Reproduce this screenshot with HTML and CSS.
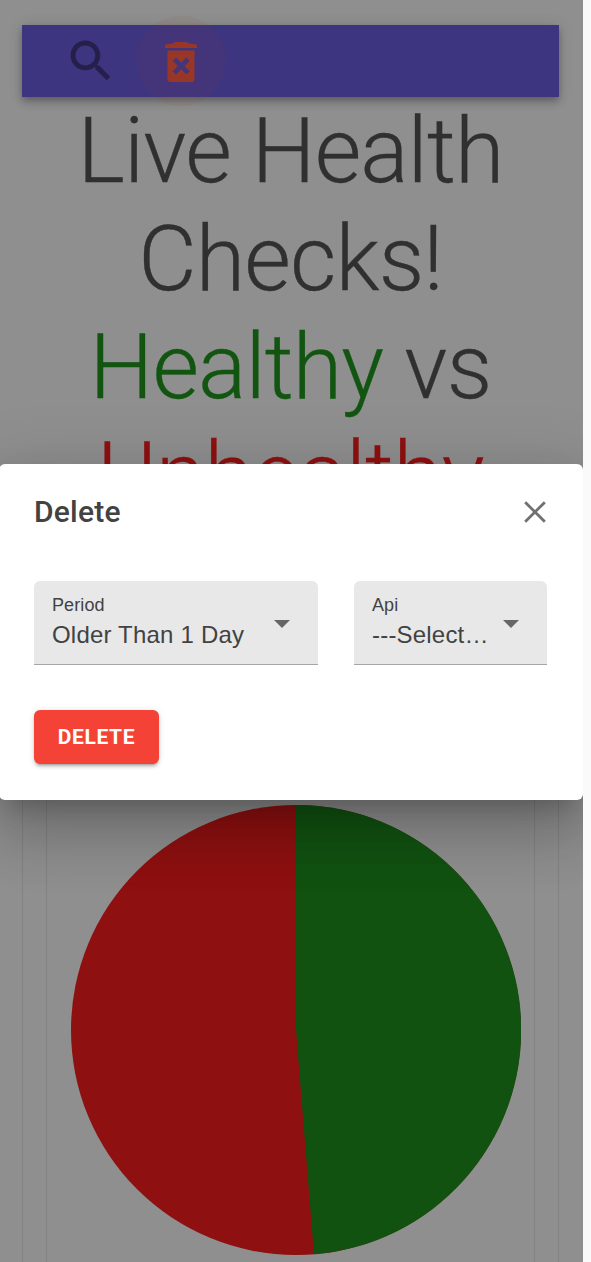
FILE: index.html
```
<!DOCTYPE html>
<html lang="en">
<head>
<meta charset="utf-8">
<title>Live Health Checks</title>
<link rel="stylesheet" href="styles.css">
</head>
<body>
<div class="page">
  <header class="toolbar">
    <button class="tool" aria-label="Search"><svg class="tool-search" viewBox="0 0 24 24"><path d="M15.500 14h-.79l-.28-.27C15.410 12.590 16 11.110 16 9.500 16 5.910 13.090 3 9.500 3S3 5.910 3 9.500 5.910 16 9.500 16c1.610 0 3.090-.59 4.230-1.570l.27.28v.79l5 4.990L20.490 19l-4.990-5zm-6 0C7.010 14 5 11.990 5 9.500S7.010 5 9.500 5 14 7.010 14 9.500 11.990 14 9.500 14z"/></svg></button>
    <button class="tool tool-active" aria-label="Delete"><svg class="tool-trash" viewBox="0 0 32 40"><path fill-rule="evenodd" d="M0 3.500Q0 2.500 1.500 2.300L8 1.600Q9 0 11 0h10q2 0 3 1.600l6.500.7Q32 2.500 32 3.500V6H0zM2.500 8.500h27V37q0 3-3 3h-21q-3 0-3-3zM11 15.500 7.700 18.800 12.900 24l-5.200 5.200 3.300 3.300 5.200-5.200 5.200 5.200 3.300-3.300-5.200-5.200 5.200-5.200-3.300-3.300-5.200 5.200z"/></svg></button>
  </header>
  <h1 class="headline">Live Health Checks! <span class="healthy">Healthy</span> vs <span class="unhealthy">Unhealthy</span></h1>
  <main class="outer-card">
    <section class="inner-card">
      <svg class="pie" viewBox="0 0 450 450"><circle class="slice-bad" cx="225" cy="225" r="225"/><path class="slice-good" d="M225 0A225 225 0 0 1 243 449.300L225 225z"/></svg>
    </section>
  </main>
  <div class="dialog" role="dialog">
    <div class="dialog-head">
      <h2 class="dialog-title">Delete</h2>
      <svg class="close" viewBox="0 0 22 22"><path d="M1.200 1.200l19.600 19.600M20.800 1.200L1.200 20.800"/></svg>
    </div>
    <div class="fields">
      <div class="field field-period">
        <div class="field-text"><span class="label">Period</span><span class="value">Older Than 1 Day</span></div>
        <span class="arrow"></span>
      </div>
      <div class="field field-api">
        <div class="field-text"><span class="label">Api</span><span class="value">---Select…</span></div>
        <span class="arrow"></span>
      </div>
    </div>
    <button class="submit">DELETE</button>
  </div>
</div>
</body>
</html>
```
FILE: styles.css
```
* { box-sizing: border-box; }
body { margin: 0; background: #fafafa; font-family: Roboto, sans-serif; overflow: hidden; }
button { border: 0; font: inherit; }
.page { position: relative; width: 583px; height: 1262px; overflow: hidden; background: #8f8f8f; padding: 25px 24px 0 22px; }
.toolbar { display: flex; align-items: center; height: 72px; padding-left: 24px; background: #3e3580; box-shadow: 0 3px 6px -1px rgba(0,0,0,.2), 0 6px 8px rgba(0,0,0,.14), 0 1px 14px rgba(0,0,0,.12); }
.tool { display: flex; align-items: center; justify-content: center; flex: none; width: 90px; height: 90px; padding: 0; border-radius: 50%; background: transparent; }
.tool-active { background: rgba(143,62,48,.08); }
.tool-search { width: 54px; height: 54px; fill: #24204a; stroke: #24204a; stroke-width: .2; }
.tool-trash { width: 32px; height: 40px; margin-top: 1px; fill: #983628; }
.headline { margin: 1px 0 0; font-weight: 300; font-size: 90px; line-height: 108px; letter-spacing: -.9px; text-align: center; color: #303030; -webkit-text-stroke: .3px; }
.healthy { color: #115511; }
.unhealthy { color: #8f1010; }
.outer-card { margin-top: 99px; height: 800px; border: 1px solid #828282; padding: 0 23px; }
.inner-card { height: 800px; border: 1px solid #828282; padding: 174px 0 0 24px; }
.pie { display: block; width: 450px; height: 450px; }
.slice-bad { fill: #8f1010; }
.slice-good { fill: #115211; }
.dialog { position: absolute; left: -1px; top: 464px; width: 584px; height: 336px; padding: 24px 36px 0 35px; border-radius: 6px; background: #fff; box-shadow: 0 16px 22px -10px rgba(0,0,0,.2), 0 36px 57px 4px rgba(0,0,0,.14), 0 14px 69px 12px rgba(0,0,0,.12); }
.dialog-head { display: flex; align-items: center; justify-content: space-between; height: 48px; }
.dialog-title { margin: 0; font-size: 30px; font-weight: 500; letter-spacing: .22px; line-height: 48px; color: #424242; }
.close { width: 22px; height: 22px; margin-right: 1px; fill: none; stroke: #707070; stroke-width: 2.800; }
.fields { display: flex; gap: 36px; margin-top: 45px; font-family: "Liberation Sans", Arial, sans-serif; }
.field { display: flex; justify-content: space-between; height: 84px; padding: 13px 28px 0 18px; background: #e8e8e8; border-bottom: 1px solid #a6a6a6; border-radius: 6px 6px 0 0; color: #424242; }
.field-period { width: 284px; }
.field-api { width: 193px; }
.field-text { display: flex; flex-direction: column; white-space: nowrap; }
.label { font-size: 18px; line-height: 22px; letter-spacing: .1px; }
.value { margin-top: 4px; font-size: 24px; line-height: 30px; letter-spacing: .2px; }
.arrow { width: 16px; height: 8px; margin-top: 26px; background: #666; clip-path: polygon(0 0, 100% 0, 50% 100%); }
.submit { display: block; width: 125px; height: 54px; margin-top: 45px; padding: 0; border-radius: 6px; background: #f44336; color: #fff; font-size: 21px; font-weight: 700; letter-spacing: .6px; box-shadow: 0 4px 2px -3px rgba(0,0,0,.2), 0 3px 3px rgba(0,0,0,.14), 0 1px 7px rgba(0,0,0,.12); }
```
